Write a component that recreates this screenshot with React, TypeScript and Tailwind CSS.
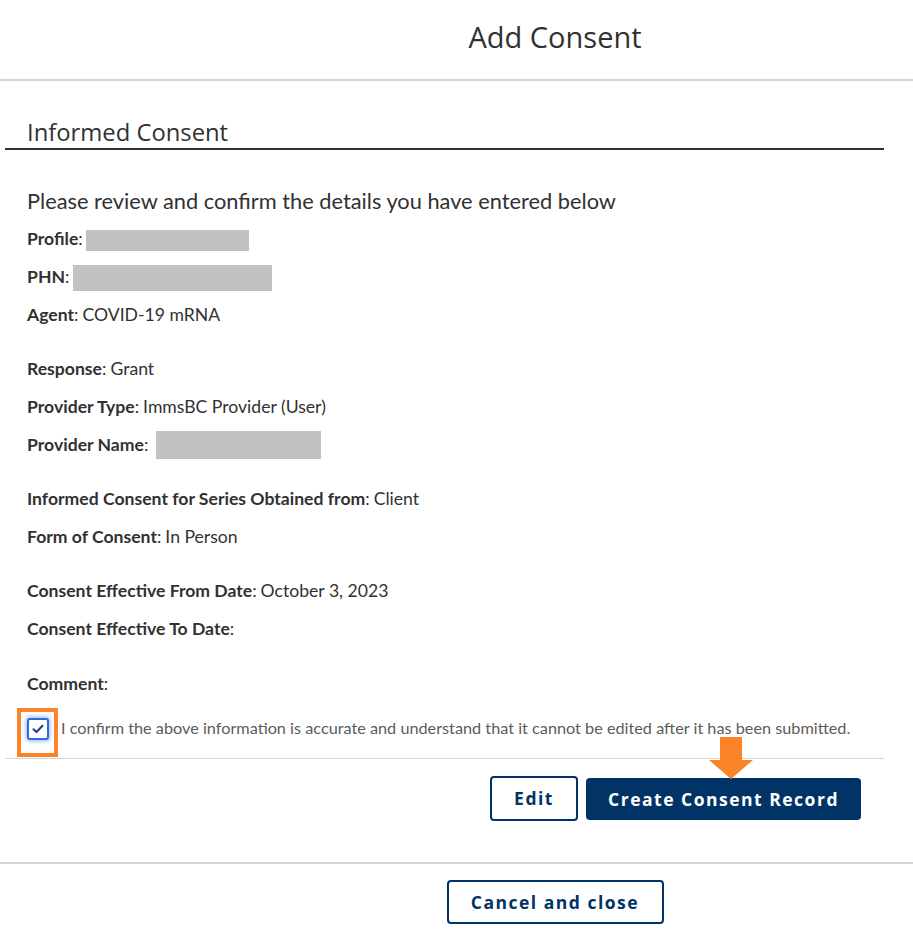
import React from "react";

const Redact = ({ w, h }: { w: number; h: number }) => (
  <span className="inline-block bg-[#c2c2c2] align-middle" style={{ width: w, height: h }} />
);

const Row = ({ label, value, children }: { label: string; value?: string; children?: React.ReactNode }) => (
  <div className="h-[38px] flex items-center text-[17.6px] text-[#313132]">
    <span className="font-bold">{label}</span>
    <span>:</span>
    {value !== undefined && <span className="ml-[4px]">{value}</span>}
    {children}
  </div>
);

export default function App() {
  return (
    <div className="w-[913px] h-[935px] bg-white text-[#313132] font-['Lato','Open_Sans',sans-serif] overflow-hidden">
      <div className="h-[81px] pb-[6px] flex items-center justify-center pl-[197px] border-b-2 border-[#d3d3d3]">
        <h1 className="text-[29px] font-['Open_Sans',sans-serif] text-[#313132]">Add Consent</h1>
      </div>

      <div className="w-[879px] ml-[5px]">
        <div className="pt-[37px] pb-[2px] border-b-2 border-[#313132] pl-[22px]">
          <h2 className="text-[23.8px] leading-[28px] font-['Open_Sans',sans-serif]">Informed Consent</h2>
        </div>

        <div className="pl-[22px] mt-[32px]">
          <p className="text-[21.8px] h-[38px] flex items-center text-[#313132]">
            Please review and confirm the details you have entered below
          </p>

          <div className="flex flex-col gap-[16px]">
            <div>
              <Row label="Profile">
                <span className="ml-[3px]"><Redact w={163} h={21} /></span>
              </Row>
              <Row label="PHN">
                <span className="ml-[4px]"><Redact w={199} h={26} /></span>
              </Row>
              <Row label="Agent" value="COVID-19 mRNA" />
            </div>
            <div>
              <Row label="Response" value="Grant" />
              <Row label="Provider Type" value="ImmsBC Provider (User)" />
              <Row label="Provider Name">
                <span className="ml-[8px]"><Redact w={165} h={28} /></span>
              </Row>
            </div>
            <div>
              <Row label="Informed Consent for Series Obtained from" value="Client" />
              <Row label="Form of Consent" value="In Person" />
            </div>
            <div>
              <Row label="Consent Effective From Date" value="October 3, 2023" />
              <Row label="Consent Effective To Date" />
            </div>
            <div className="mt-[1px]">
              <Row label="Comment" />
            </div>
          </div>
        </div>

        <div className="relative h-[56px] pb-[4px] flex items-center pl-[22px] border-b border-[#d6d6d6]">
          <span className="w-[22px] h-[22px] rounded-[3px] border-2 border-[#2e6bd8] bg-white flex items-center justify-center shadow-[0_0_4px_1px_rgba(70,130,240,0.6)]">
            <svg width="12" height="10" viewBox="0 0 12 10">
              <path d="M1.5 5.2 L4.5 8 L10.5 1.8" fill="none" stroke="#1c3a8a" strokeWidth="2" strokeLinecap="round" strokeLinejoin="round" />
            </svg>
          </span>
          <span className="ml-[12px] text-[16.25px] text-[#5b5b5b]">
            I confirm the above information is accurate and understand that it cannot be edited after it has been submitted.
          </span>
          <span className="absolute left-[12px] top-[5px] w-[41px] h-[49px] border-[4px] border-[#fb8428]" />
        </div>

        <div className="relative flex justify-end gap-[8px] pr-[23px] pt-[17px]">
          <svg className="absolute left-[703px] top-[-22px]" width="46" height="42" viewBox="0 0 46 42">
            <path d="M12 0 H34 V23 H45 L23 42 L1 23 H12 Z" fill="#fb8428" />
          </svg>
          <button className="w-[88px] h-[45px] rounded-[4px] border-2 border-[#003366] text-[#003366] bg-white font-['Open_Sans',sans-serif] font-bold text-[17.5px] tracking-[1.5px]">
            Edit
          </button>
          <button className="w-[275px] h-[42px] mt-[2px] rounded-[4px] bg-[#013366] text-white font-['Open_Sans',sans-serif] font-bold text-[17.5px] tracking-[1.5px]">
            Create Consent Record
          </button>
        </div>
      </div>

      <div className="mt-[41px] border-t-2 border-[#d3d3d3] flex justify-center pl-[197px] pt-[16px]">
        <button className="w-[217px] h-[44px] rounded-[4px] border-2 border-[#003366] text-[#003366] bg-white font-['Open_Sans',sans-serif] font-bold text-[17.5px] tracking-[1.5px]">
          Cancel and close
        </button>
      </div>
    </div>
  );
}
